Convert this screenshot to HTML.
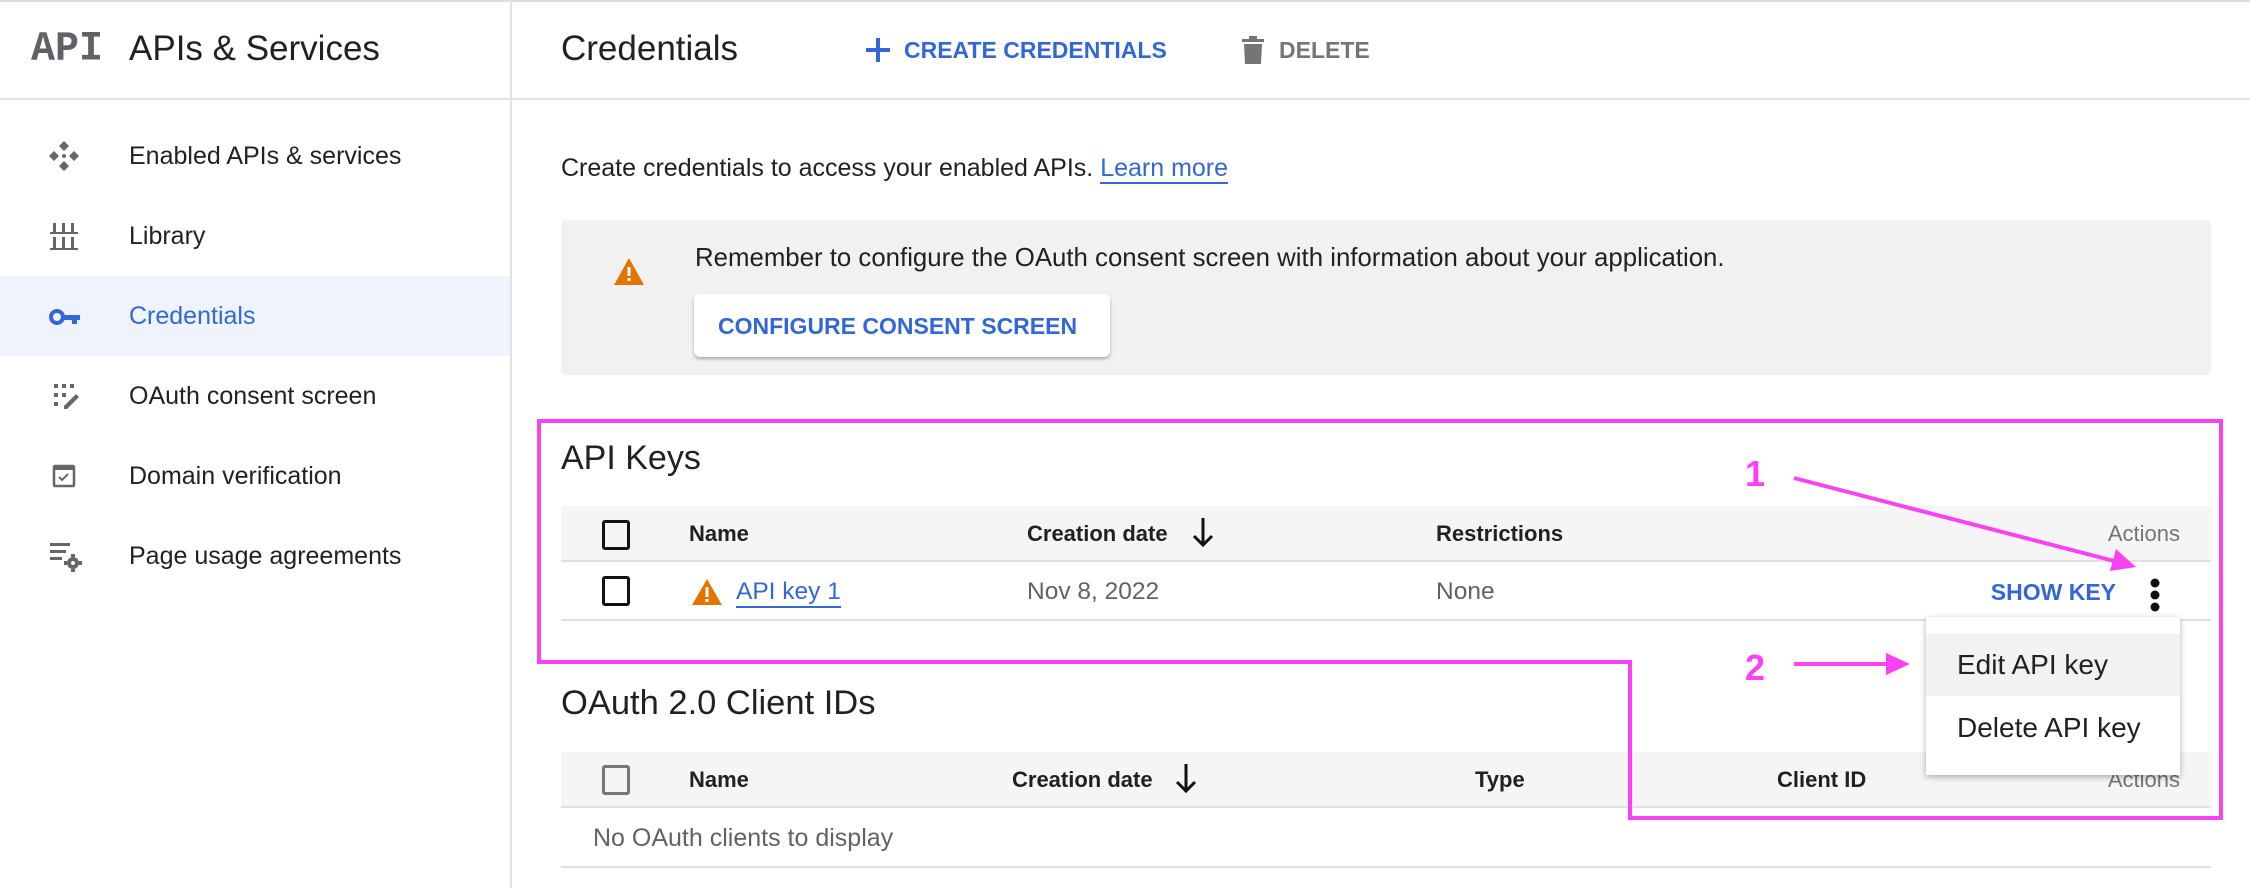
<!DOCTYPE html>
<html><head><meta charset="utf-8"><style>
*{margin:0;padding:0;box-sizing:border-box}
body{width:2250px;height:888px;background:#fff;font-family:"Liberation Sans",Arial,sans-serif;color:#202124;position:relative;overflow:hidden}
.a{position:absolute;white-space:nowrap}
.side{font-size:25px;line-height:30px}
.blue{color:#3367d6}
.hd{font-size:22px;font-weight:bold;color:#202124}
.cb{position:absolute;width:28px;height:30px;border:3px solid #111;border-radius:3px}
</style></head><body>
<div class="a" style="left:0;top:0;width:2250px;height:2px;background:#ddd"></div>
<div class="a" style="left:510px;top:0;width:2px;height:888px;background:#e2e2e2"></div>
<div class="a" style="left:0;top:98px;width:2250px;height:2px;background:#e2e2e2"></div>
<div class="a" style="left:31px;top:28px;font-family:'Liberation Mono',monospace;font-weight:bold;font-size:40px;color:#5f6368;line-height:44px;transform:scaleY(1.05)">API</div>
<div class="a" style="left:129px;top:29px;font-size:35px;line-height:40px">APIs &amp; Services</div>
<div class="a" style="left:0;top:276px;width:510px;height:80px;background:#eef3fd"></div>
<svg class="a" style="left:48px;top:140px" width="32" height="32" viewBox="0 0 32 32" fill="#666"><path d="M16 1l5 5-5 5-5-5z M1 16l5-5 5 5-5 5z M31 16l-5-5-5 5 5 5z M16 31l5-5-5-5-5 5z"/><circle cx="16" cy="16" r="2"/></svg>
<svg class="a" style="left:50px;top:222px" width="28" height="30" viewBox="0 0 28 30" fill="#666"><rect x="0" y="10" width="28" height="2"/><rect x="0" y="26" width="28" height="2"/><rect x="3" y="1" width="3" height="9"/><rect x="12" y="1" width="3" height="9"/><rect x="21" y="1" width="3" height="9"/><rect x="3" y="15" width="3" height="11"/><rect x="12" y="15" width="3" height="11"/><rect x="21" y="15" width="3" height="11"/></svg>
<svg class="a" style="left:49px;top:307px" width="32" height="20" viewBox="0 0 32 20"><circle cx="8" cy="10" r="6" fill="none" stroke="#3367d6" stroke-width="4"/><path d="M14 8h17v5h-3v4h-5v-4h-9z" fill="#3367d6"/></svg>
<svg class="a" style="left:52px;top:382px" width="28" height="28" viewBox="0 0 28 28" fill="#666"><rect x="2" y="2" width="4" height="4"/><rect x="10" y="2" width="4" height="4"/><rect x="18" y="2" width="4" height="4"/><rect x="2" y="11" width="4" height="4"/><rect x="10" y="11" width="4" height="4"/><rect x="2" y="20" width="4" height="4"/><path d="M12 24l12-12 3 3-12 12h-3z"/></svg>
<svg class="a" style="left:52px;top:464px" width="24" height="24" viewBox="0 0 24 24"><rect x="2" y="2" width="20" height="20" rx="1" fill="none" stroke="#666" stroke-width="2.5"/><rect x="2" y="2" width="20" height="4" fill="#666"/><path d="M7 13l3 3 6-6" fill="none" stroke="#666" stroke-width="2"/></svg>
<svg class="a" style="left:48px;top:541px" width="34" height="32" viewBox="0 0 34 32" fill="#666"><rect x="2" y="2" width="20" height="3"/><rect x="2" y="9" width="16" height="3"/><rect x="2" y="16" width="12" height="3"/><circle cx="25" cy="22" r="6"/><circle cx="25" cy="22" r="2" fill="#fff"/><path d="M23 13h4v3h-4zM23 28h4v3h-4zM16 20h3v4h-3zM31 20h3v4h-3z"/></svg>
<div class="a side" style="left:129px;top:141px">Enabled APIs &amp; services</div>
<div class="a side" style="left:129px;top:221px">Library</div>
<div class="a side blue" style="left:129px;top:301px">Credentials</div>
<div class="a side" style="left:129px;top:381px">OAuth consent screen</div>
<div class="a side" style="left:129px;top:461px">Domain verification</div>
<div class="a side" style="left:129px;top:541px">Page usage agreements</div>
<div class="a" style="left:561px;top:29px;font-size:35px;line-height:40px">Credentials</div>
<svg class="a" style="left:866px;top:38px" width="24" height="24" viewBox="0 0 24 24"><path d="M10 0h4v10h10v4H14v10h-4V14H0v-4h10z" fill="#3367d6"/></svg>
<div class="a blue" style="left:904px;top:36px;font-size:23px;font-weight:bold;line-height:28px">CREATE CREDENTIALS</div>
<svg class="a" style="left:1242px;top:36px" width="22" height="28" viewBox="0 0 22 28" fill="#757575"><rect x="0" y="3" width="22" height="3"/><rect x="7" y="0" width="8" height="4"/><path d="M2 8h18l-1 20H3z"/></svg>
<div class="a" style="left:1279px;top:36px;font-size:23px;font-weight:bold;color:#757575;line-height:28px">DELETE</div>
<div class="a" style="left:561px;top:153px;font-size:25px;line-height:30px">Create credentials to access your enabled APIs. <span class="blue" style="border-bottom:2px solid #3367d6">Learn more</span></div>
<div class="a" style="left:561px;top:220px;width:1650px;height:155px;background:#f1f1f1;border-radius:5px"></div>
<svg class="a" style="left:614px;top:258px" width="30" height="27" viewBox="0 0 30 27"><path d="M15 0l15 27H0z" fill="#e37400"/><rect x="13.5" y="9" width="3" height="9" fill="#fff"/><rect x="13.5" y="20" width="3" height="3" fill="#fff"/></svg>
<div class="a" style="left:695px;top:243px;font-size:25.8px;line-height:30px">Remember to configure the OAuth consent screen with information about your application.</div>
<div class="a" style="left:694px;top:294px;width:416px;height:63px;background:#fff;border-radius:6px;box-shadow:0 2px 3px rgba(0,0,0,.3)"></div>
<div class="a blue" style="left:718px;top:312px;font-size:23px;font-weight:bold;line-height:28px">CONFIGURE CONSENT SCREEN</div>
<div class="a" style="left:561px;top:438px;font-size:34px;line-height:40px">API Keys</div>
<div class="a" style="left:561px;top:506px;width:1650px;height:56px;background:#f5f5f5;border-bottom:2px solid #e0e0e0"></div>
<div class="cb" style="left:602px;top:520px"></div>
<div class="a hd" style="left:689px;top:521px;line-height:26px">Name</div>
<div class="a hd" style="left:1027px;top:521px;line-height:26px">Creation date</div>
<svg class="a" style="left:1192px;top:518px" width="22" height="30" viewBox="0 0 22 30"><path d="M11 0v27M2 18l9 9 9-9" fill="none" stroke="#111" stroke-width="3"/></svg>
<div class="a hd" style="left:1436px;top:521px;line-height:26px">Restrictions</div>
<div class="a" style="left:2080px;top:521px;width:100px;text-align:right;font-size:22px;color:#757575;line-height:26px">Actions</div>
<div class="cb" style="left:602px;top:576px"></div>
<svg class="a" style="left:692px;top:579px" width="30" height="26" viewBox="0 0 30 26"><path d="M15 0l15 26H0z" fill="#e37400"/><rect x="13.5" y="8" width="3" height="10" fill="#fff"/><rect x="13.5" y="20" width="3" height="3" fill="#fff"/></svg>
<div class="a blue" style="left:736px;top:578px;font-size:24.5px;line-height:28px;border-bottom:2px solid #3367d6">API key 1</div>
<div class="a" style="left:1027px;top:578px;font-size:24.5px;color:#5f6368;line-height:28px">Nov 8, 2022</div>
<div class="a" style="left:1436px;top:578px;font-size:24.5px;color:#5f6368;line-height:28px">None</div>
<div class="a blue" style="left:1988px;top:578px;width:128px;text-align:right;font-size:23px;font-weight:bold;line-height:28px">SHOW KEY</div>
<svg class="a" style="left:2149px;top:577px" width="12" height="36" viewBox="0 0 12 36" fill="#111"><circle cx="6" cy="6" r="4.5"/><circle cx="6" cy="18" r="4.5"/><circle cx="6" cy="30" r="4.5"/></svg>
<div class="a" style="left:561px;top:619px;width:1650px;height:2px;background:#e0e0e0"></div>
<div class="a" style="left:561px;top:683px;font-size:34.5px;line-height:40px">OAuth 2.0 Client IDs</div>
<div class="a" style="left:561px;top:752px;width:1650px;height:56px;background:#f5f5f5;border-bottom:2px solid #e0e0e0"></div>
<div class="cb" style="left:602px;top:765px;border-color:#777"></div>
<div class="a hd" style="left:689px;top:767px;line-height:26px">Name</div>
<div class="a hd" style="left:1012px;top:767px;line-height:26px">Creation date</div>
<svg class="a" style="left:1175px;top:764px" width="22" height="30" viewBox="0 0 22 30"><path d="M11 0v27M2 18l9 9 9-9" fill="none" stroke="#111" stroke-width="3"/></svg>
<div class="a hd" style="left:1475px;top:767px;line-height:26px">Type</div>
<div class="a hd" style="left:1777px;top:767px;line-height:26px">Client ID</div>
<div class="a" style="left:2080px;top:767px;width:100px;text-align:right;font-size:22px;color:#757575;line-height:26px">Actions</div>
<div class="a" style="left:593px;top:824px;font-size:25px;color:#5f6368;line-height:28px">No OAuth clients to display</div>
<div class="a" style="left:561px;top:866px;width:1650px;height:2px;background:#e0e0e0"></div>
<div class="a" style="left:1926px;top:617px;width:254px;height:158px;background:#fff;box-shadow:0 2px 6px rgba(0,0,0,.3)"></div>
<div class="a" style="left:1926px;top:634px;width:254px;height:62px;background:#f2f2f2"></div>
<div class="a" style="left:1957px;top:649px;font-size:28px;line-height:32px">Edit API key</div>
<div class="a" style="left:1957px;top:712px;font-size:28px;line-height:32px">Delete API key</div>
<svg class="a" style="left:0;top:0" width="2250" height="888">
<path d="M539 421H2221V818H1630V662H539Z" fill="none" stroke="#f942f2" stroke-width="4"/>
<line x1="1794" y1="478" x2="2118" y2="562" stroke="#f942f2" stroke-width="4"/>
<path d="M2136 567l-26 4 6-22z" fill="#f942f2"/>
<line x1="1794" y1="664" x2="1888" y2="664" stroke="#f942f2" stroke-width="4"/>
<path d="M1910 664l-24-11v22z" fill="#f942f2"/>
<text x="1745" y="486" font-family="Liberation Sans" font-weight="bold" font-size="36" fill="#f942f2">1</text>
<text x="1745" y="680" font-family="Liberation Sans" font-weight="bold" font-size="36" fill="#f942f2">2</text>
</svg>
</body></html>
